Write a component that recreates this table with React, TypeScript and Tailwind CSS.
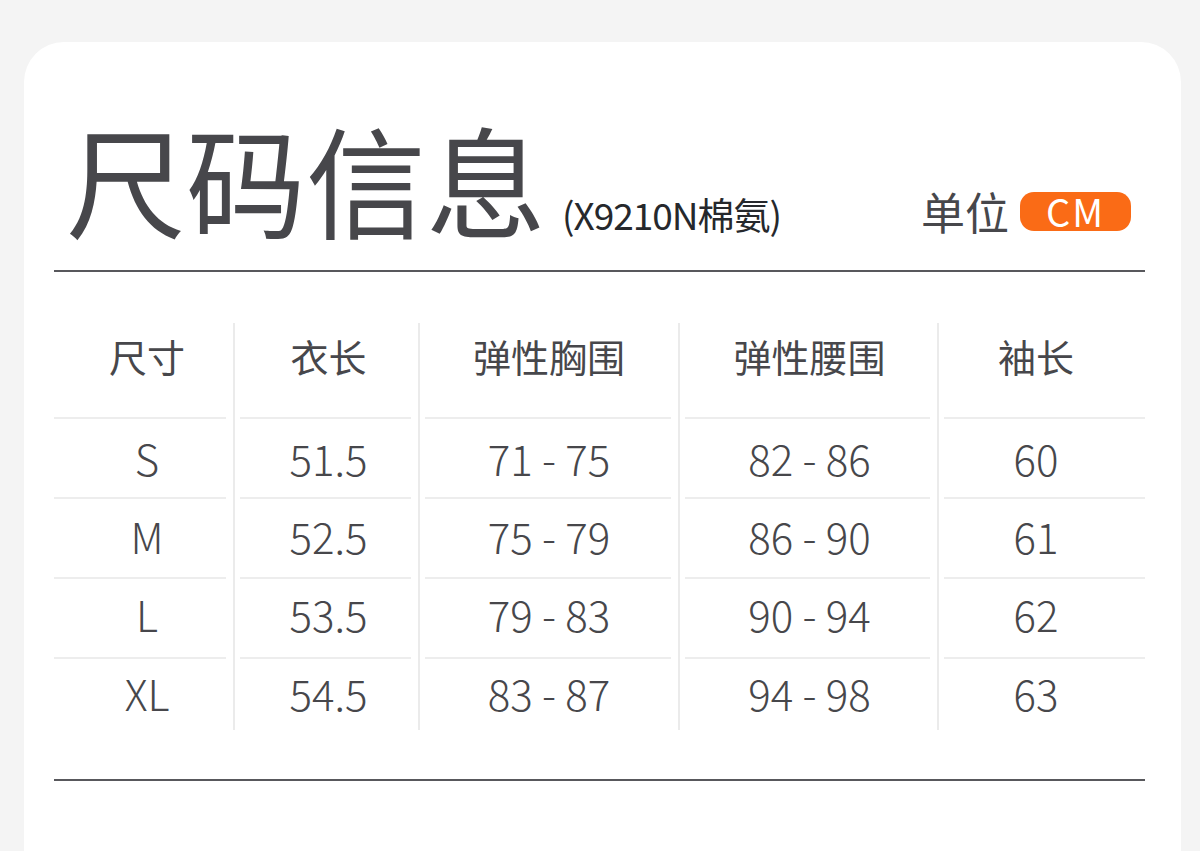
import React from 'react';

const font = { fontFamily: '"Noto Sans CJK SC", "Noto Sans", sans-serif' };

const columns = [
  { title: '尺寸', width: 'w-[179px]', first: true, last: false, shift: 'pl-[7px]', values: ['S', 'M', 'L', 'XL'] },
  { title: '衣长', width: 'w-[185px]', first: false, last: false, shift: 'pl-[4px]', values: ['51.5', '52.5', '53.5', '54.5'] },
  { title: '弹性胸围', width: 'w-[260px]', first: false, last: false, shift: 'pl-0', values: ['71 - 75', '75 - 79', '79 - 83', '83 - 87'] },
  { title: '弹性腰围', width: 'w-[259px]', first: false, last: false, shift: 'pl-[2px]', values: ['82 - 86', '86 - 90', '90 - 94', '94 - 98'] },
  { title: '袖长', width: 'w-[208px]', first: false, last: true, shift: 'pr-[12px]', values: ['60', '61', '62', '63'] },
];

// rows in the picture drift up a little against the lines
const rowPad = ['pt-[18px]', 'pt-[16px]', 'pt-[14px]', 'pt-[13px]'];

function Column({ col }: { col: (typeof columns)[number] }) {
  const lineInset = col.first ? 'mr-[7px]' : col.last ? 'ml-[5px]' : 'ml-[5px] mr-[7px]';
  return (
    <div className={`${col.width} flex flex-col ${col.first ? '' : 'border-l-2 border-[#ebebeb]'}`}>
      <div className={`h-[94px] pt-[14px] flex justify-center ${col.shift}`}>
        <span className="text-[38px] leading-[38px] text-[#47474b]">{col.title}</span>
      </div>
      {col.values.map((v, i) => (
        <div key={v}>
          <div className={`h-[2px] bg-[#ededed] ${lineInset}`} />
          <div className={`${i === 3 ? 'h-[71px]' : 'h-[78px]'} ${rowPad[i]} flex justify-center ${col.shift}`}>
            <span className="text-[42px] leading-[42px] font-light text-[#47474b]">{v}</span>
          </div>
        </div>
      ))}
    </div>
  );
}

export default function App() {
  return (
    <div className="min-h-screen bg-[#f4f4f4] pt-[42px] pl-[24px] overflow-hidden" style={font}>
      <div className="w-[1157px] h-[809px] bg-white rounded-t-[40px] pl-[30px]">
        <div className="w-[1091px]">
          <div className="flex items-baseline pt-[76px] pl-[12px] pr-[14px]">
            <h1 className="text-[120px] leading-[120px] font-normal text-[#47474b]">尺码信息</h1>
            <span className="ml-[16px] text-[37px] leading-[37px] font-normal tracking-[-1px] text-[#26282c]">
              (X9210N棉氨)
            </span>
            <div className="ml-auto flex items-center">
              <span className="text-[44px] leading-[44px] text-[#47474b]">单位</span>
              <span className="ml-[11px] w-[111px] h-[39px] rounded-[14px] bg-[#fa6b16] flex items-center justify-center text-white text-[38px] leading-[38px] tracking-[2px]">
                CM
              </span>
            </div>
          </div>
          <div className="mt-[32px] h-[2px] bg-[#58585c]" />
          <div className="mt-[51px] flex">
            {columns.map((c) => (
              <Column key={c.title} col={c} />
            ))}
          </div>
          <div className="mt-[49px] h-[2px] bg-[#58585c]" />
        </div>
      </div>
    </div>
  );
}
